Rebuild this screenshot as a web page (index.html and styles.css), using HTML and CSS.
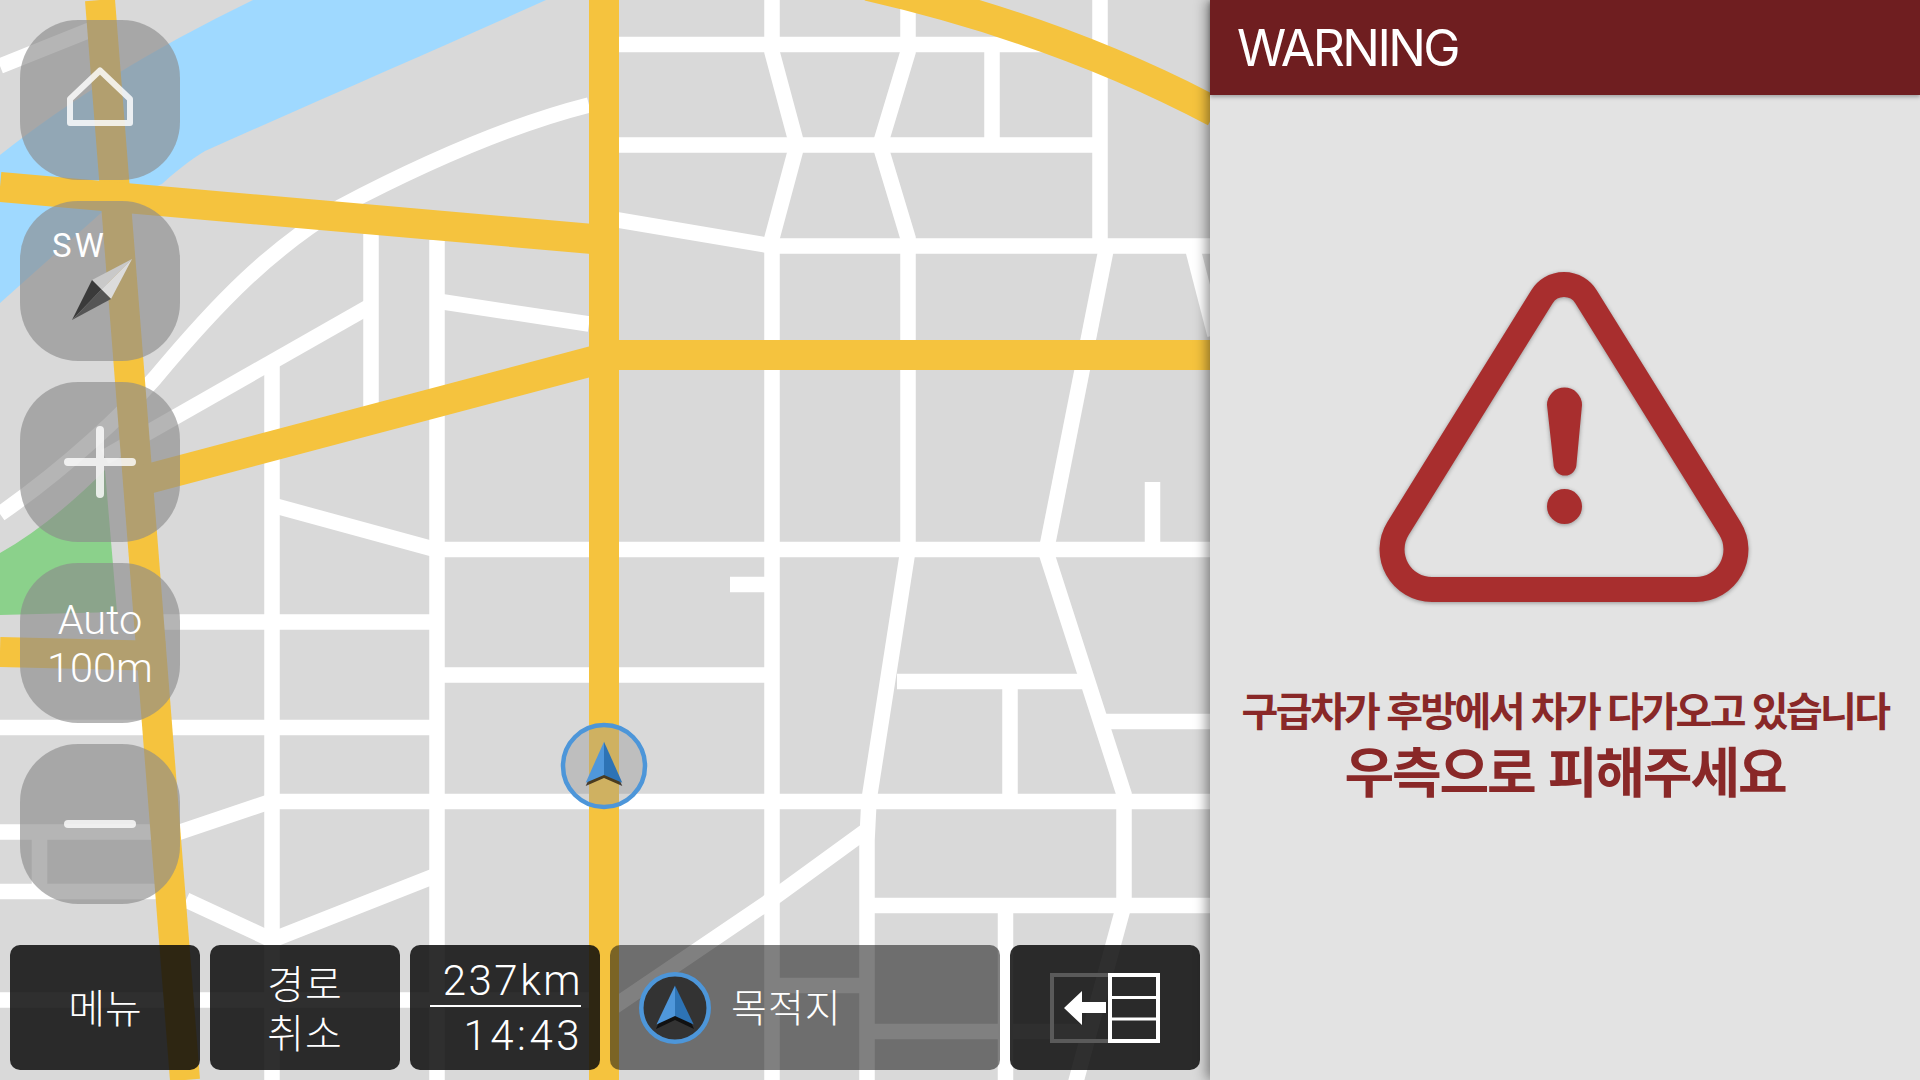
FILE: index.html
```html
<!DOCTYPE html>
<html lang="ko">
<head>
<meta charset="utf-8">
<title>Navigation warning</title>
<link rel="stylesheet" href="styles.css">
</head>
<body>
<main class="screen">
  <section class="map">
    <svg class="map-canvas" viewBox="0 0 1210 1080" width="1210" height="1080" aria-hidden="true">
      <path class="water" d="M253,0 L546,0 C440,48 330,95 205,151 C190,160 175,172 162,184 L110,205 L0,303 L0,155 C70,100 150,50 253,0 Z"/>
      <path class="park" d="M105,470 Q50,525 0,553 L0,615 L117,612 Z"/>
      <g class="road">
        <path d="M0,66 L100,26"/>
        <path d="M589,105 C510,125 420,165 340,207 C270,250 220,300 155,378 C125,412 70,465 0,514"/>
        <path d="M372,305 L105,457"/>
        <path d="M371,234 V410"/>
        <path d="M272,362 V1080"/>
        <path d="M437,240 V1080"/>
        <path d="M437,301 L589,324"/>
        <path d="M272,505 L437,550"/>
        <path d="M140,622 H437"/>
        <path d="M437,549.5 H1210"/>
        <path d="M437,675 H772"/>
        <path d="M0,727.5 H437"/>
        <path d="M272,801.5 H1210"/>
        <path d="M272,801 L180,832 H0"/>
        <path d="M0,891.5 H165"/>
        <path d="M39.5,832 V891"/>
        <path d="M186,900 L272,940 L437,875"/>
        <path d="M0,1000 H589"/>
        <path d="M619,44.5 H1047"/>
        <path d="M619,145 H1100"/>
        <path d="M612,219 L772,246 H1210"/>
        <path d="M772,0 V52 L797,145 L772,238 V1080"/>
        <path d="M908,0 V52 L880,145 L908,238 V550 L869,800 L867,840 V1080"/>
        <path d="M992,44 V145"/>
        <path d="M1100,0 V246"/>
        <path d="M1106,250 L1046,552"/>
        <path d="M1192,246 L1215,335"/>
        <path d="M1152.5,482 V550"/>
        <path d="M1046,552 L1124,794 V905 L1075,1085"/>
        <path d="M730,584.5 H772"/>
        <path d="M897,681.5 H1082"/>
        <path d="M1010,681 V802"/>
        <path d="M1100,721.5 H1210"/>
        <path d="M867,905.5 H1210"/>
        <path d="M1005.5,905 V1080"/>
        <path d="M772,985.5 H867"/>
        <path d="M867,1031.5 H1095"/>
        <path d="M867,830 L764,905 L612,1008"/>
      </g>
      <g class="highway">
        <path d="M100,0 L185,1080"/>
        <path d="M0,187 L604,240"/>
        <path d="M140,481 L604,358"/>
        <path d="M0,652 L165,656"/>
        <path d="M604,355 H1210"/>
        <path d="M604,0 V1080"/>
        <path d="M868,-14 Q1060,30 1215,112"/>
      </g>
      <circle class="marker-ring" cx="604" cy="766" r="41"/>
      <path class="arrow-shadow" d="M604,745 L622.3,786 L604,778 L585.7,786 Z"/>
      <path class="arrow-left" d="M604,741.7 V775 L585.7,782.7 Z"/>
      <path class="arrow-right" d="M604,741.7 V775 L622.3,782.7 Z"/>
    </svg>

    <div class="side-controls">
      <div class="round-btn">
        <svg class="btn-icon" viewBox="0 0 160 160" aria-hidden="true"><path class="home-line" d="M80,50.5 L50,79 V103 H110 V79 Z"/></svg>
      </div>
      <div class="round-btn compass">
        <span class="compass-label">SW</span>
        <svg class="btn-icon" viewBox="0 0 160 160" aria-hidden="true">
          <path class="c-a" d="M112,58 L72,79 L81.5,88.5 Z"/>
          <path class="c-b" d="M112,58 L91,98 L81.5,88.5 Z"/>
          <path class="c-c" d="M52,119 L72,79 L81.5,88.5 Z"/>
          <path class="c-d" d="M52,119 L91,98 L81.5,88.5 Z"/>
        </svg>
      </div>
      <div class="round-btn">
        <svg class="btn-icon" viewBox="0 0 160 160" aria-hidden="true"><path class="sign-line" d="M48,80 H112 M80,48 V112"/></svg>
      </div>
      <div class="round-btn scale-label">Auto<br>100m</div>
      <div class="round-btn">
        <svg class="btn-icon" viewBox="0 0 160 160" aria-hidden="true"><path class="sign-line" d="M48,80 H112"/></svg>
      </div>
    </div>

    <div class="bottom-bar">
      <div class="bar-btn menu-text">메뉴</div>
      <div class="bar-btn route-text">경로<br>취소</div>
      <div class="bar-btn trip">
        <span class="trip-value">237km</span>
        <span class="trip-rule"></span>
        <span class="trip-value trip-time">14:43</span>
      </div>
      <div class="bar-btn destination">
        <svg class="dest-icon" viewBox="0 0 76 76" aria-hidden="true">
          <circle class="dest-ring" cx="38" cy="38" r="33.7"/>
          <path class="dest-shadow" d="M38,16 L57,59 L38,50 L19,59 Z"/>
          <path class="arrow-left" d="M38,15.6 V46 L19.5,54.5 Z"/>
          <path class="arrow-right" d="M38,15.6 V46 L56.7,54.5 Z"/>
        </svg>
        <span class="dest-text">목적지</span>
      </div>
      <div class="bar-btn">
        <svg class="split-icon" viewBox="0 0 110 70" aria-hidden="true">
          <rect class="split-old" x="2" y="2" width="58" height="66"/>
          <path class="split-arrow" d="M14,35 L32,18 V29 H56 V40 H32 V52 Z"/>
          <rect class="split-new" x="60" y="2" width="48" height="66"/>
          <path class="split-div" d="M60,24.500 H108 M60,46 H108"/>
        </svg>
      </div>
    </div>
  </section>

  <aside class="panel">
    <header class="panel-head">WARNING</header>
    <div class="panel-body">
      <svg class="alert-icon" viewBox="1380 270 368 334" width="368" height="334" aria-hidden="true">
        <path class="alert-frame" d="M1541.9,296.8 A26,26 0 0 1 1586.1,296.8 L1730,528.5 A40,40 0 0 1 1696,589.5 L1432,589.5 A40,40 0 0 1 1398,528.5 Z"/>
        <path class="alert-mark" d="M1547,405 A17.5,17.5 0 0 1 1582,405 L1576.500,464 A11.500,11.500 0 0 1 1553.500,464 Z"/>
        <circle class="alert-mark" cx="1564.500" cy="506.500" r="17.500"/>
      </svg>
      <p class="msg-line">구급차가 후방에서 차가 다가오고 있습니다</p>
      <p class="msg-strong">우측으로 피해주세요</p>
    </div>
  </aside>
</main>
</body>
</html>
```
FILE: styles.css
```css
* { box-sizing: border-box; }
html, body { margin: 0; height: 100%; overflow: hidden; }
body { font-family: Roboto, "Noto Sans CJK KR", sans-serif; background: #d9d9d9; }

.screen { display: flex; width: 1920px; height: 1080px; }

/* map */
.map { position: relative; width: 1210px; height: 1080px; flex: none; overflow: hidden; background: #d9d9d9; }
.map-canvas { display: block; }
.water { fill: #9fd9ff; }
.park { fill: #8bd18b; }
.road path { fill: none; stroke: #fff; stroke-width: 15.500; stroke-linejoin: miter; }
.highway path { fill: none; stroke: #f5c33e; stroke-width: 30; }
.marker-ring { fill: rgba(150, 150, 150, .4); stroke: #4d96d9; stroke-width: 4.500; }
.arrow-shadow { fill: rgba(30, 20, 10, .75); }
.arrow-left { fill: #4f97db; }
.arrow-right { fill: #2d73b5; }

/* side buttons */
.side-controls { position: absolute; left: 20px; top: 20px; display: flex; flex-direction: column; gap: 21px; }
.round-btn {
  position: relative;
  width: 160px; height: 160px;
  border-radius: 58px;
  background: rgba(140, 140, 140, .64);
  display: flex; align-items: center; justify-content: center;
  color: #fff;
}
.btn-icon { display: block; width: 160px; height: 160px; }
.home-line { fill: none; stroke: rgba(255, 255, 255, .82); stroke-width: 6; stroke-linejoin: round; }
.sign-line { fill: none; stroke: rgba(255, 255, 255, .8); stroke-width: 8; stroke-linecap: round; }
.compass-label { position: absolute; left: 32px; top: 25px; font-size: 33px; line-height: 40px; letter-spacing: 3px; }
.c-a { fill: #c9c9c9; }
.c-b { fill: #dcdcdc; }
.c-c { fill: #3a3a3a; }
.c-d { fill: #555; }
.scale-label { padding-top: 2px; font-size: 41.500px; line-height: 48px; font-weight: 300; text-align: center; }

/* bottom bar */
.bottom-bar { position: absolute; left: 10px; bottom: 10px; display: flex; gap: 10px; }
.bar-btn {
  width: 190px; height: 125px;
  border-radius: 10px;
  background: rgba(10, 10, 10, .85);
  color: #fff;
  display: flex; align-items: center; justify-content: center;
  font-family: "Noto Sans CJK KR", sans-serif;
}
.menu-text { padding-bottom: 4px; font-size: 40px; font-weight: 300; }
.route-text { padding-bottom: 2px; font-size: 40px; line-height: 49px; font-weight: 300; letter-spacing: 1px; text-align: center; }
.trip { flex-direction: column; align-items: flex-end; justify-content: flex-start; padding: 12px 17px 0 0; font-family: Roboto, sans-serif; font-weight: 300; }
.trip-value { display: block; font-size: 42px; line-height: 48px; letter-spacing: 2.500px; }
.trip-rule { display: block; width: 151px; height: 2px; margin-right: 2px; background: #fff; }
.trip-time { padding-top: 5px; letter-spacing: 3.500px; }
.destination { width: 390px; background: rgba(15, 15, 15, .53); justify-content: flex-start; padding-left: 27px; gap: 18px; }
.dest-icon { width: 76px; height: 76px; flex: none; }
.dest-ring { fill: #333; stroke: #4d96d9; stroke-width: 4.500; }
.dest-shadow { fill: #111; }
.dest-text { padding-bottom: 5px; font-size: 39px; font-weight: 300; letter-spacing: 1px; }
.split-icon { width: 110px; height: 70px; display: block; }
.split-old { fill: none; stroke: #5a5a5a; stroke-width: 4; }
.split-new { fill: none; stroke: #fff; stroke-width: 4; }
.split-div { fill: none; stroke: #fff; stroke-width: 3; }
.split-arrow { fill: #fff; }

/* warning panel */
.panel { position: relative; flex: 1; display: flex; flex-direction: column; background: #e3e3e3; box-shadow: -3px 0 12px rgba(0, 0, 0, .45); }
.panel-head {
  height: 95px;
  background: #6f1e20;
  color: #fff;
  padding-left: 27px;
  font-family: Inter, sans-serif;
  font-size: 50px;
  line-height: 97px;
  letter-spacing: -2.600px;
  box-shadow: 0 2px 4px rgba(0, 0, 0, .3);
}
.panel-body { display: flex; flex-direction: column; align-items: center; padding-top: 175px; }
.alert-icon { display: block; margin-left: -2px; overflow: visible; filter: drop-shadow(0 1px 2px rgba(0, 0, 0, .35)); }
.alert-frame { fill: none; stroke: #a82e2e; stroke-width: 25; }
.alert-mark { fill: #a82e2e; }
.msg-line, .msg-strong { margin: 0; font-family: "Noto Sans CJK KR", sans-serif; font-weight: 700; color: #892828; white-space: nowrap; }
.msg-line { margin-top: 77px; font-size: 40px; line-height: 56px; letter-spacing: -2.600px; word-spacing: -.75px; }
.msg-strong { margin-top: -1px; font-size: 54px; line-height: 68px; letter-spacing: -2.100px; }
```
